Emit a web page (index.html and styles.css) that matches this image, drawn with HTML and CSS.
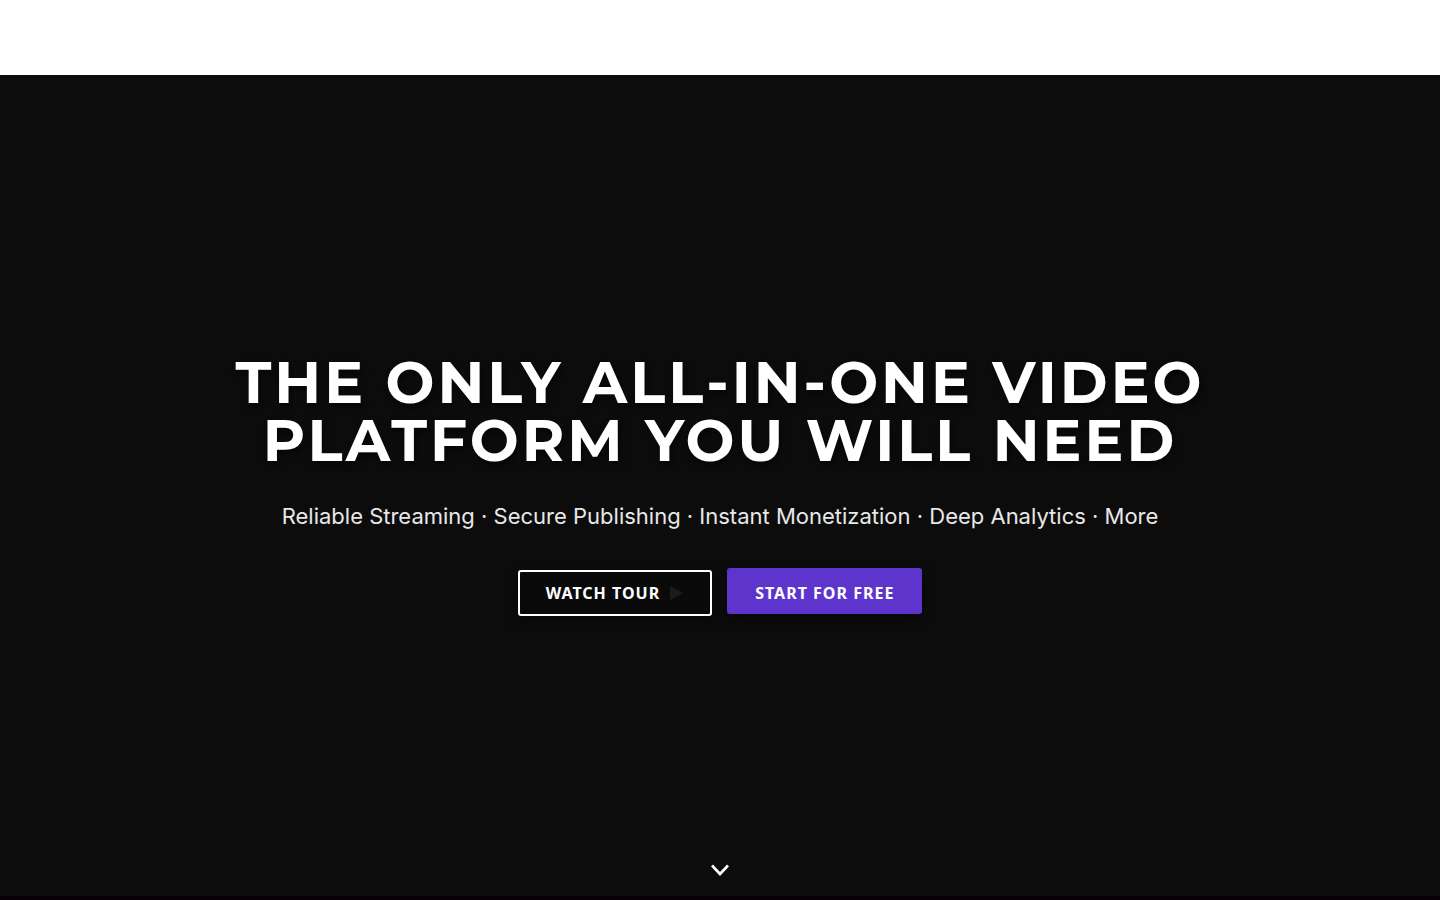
FILE: index.html
```
<!DOCTYPE html>
<html lang="en">
<head>
    <meta charset="UTF-8">
    <meta name="viewport" content="width=device-width, initial-scale=1.0">
    <title>The only all-in-one video platform you will need</title>
    <link rel="stylesheet" href="styles.css">
</head>
<body>
    <header class="topbar"></header>
    <main class="hero">
        <section class="hero-content">
            <h1>The only all-in-one video platform you will need</h1>
            <p class="subtitle">Reliable Streaming · Secure Publishing · Instant Monetization · Deep Analytics · More</p>
            <div class="actions">
                <button type="button" class="btn btn-outline">Watch tour
                    <svg class="play" viewBox="0 0 16 16" aria-hidden="true"><path d="M2 1 15 8 2 15z"/></svg>
                </button>
                <button type="button" class="btn btn-primary">Start for free</button>
            </div>
        </section>
        <a href="#next" class="scroll-down" aria-label="Scroll down">
            <svg viewBox="0 0 20 12" aria-hidden="true"><path d="M2 1.5 10 10 18 1.5"/></svg>
        </a>
    </main>
    <div id="next" class="next"></div>
</body>
</html>
```
FILE: styles.css
```
* {
    box-sizing: border-box;
}

body {
    margin: 0;
    min-height: 100vh;
    display: flex;
    flex-direction: column;
    font-family: Inter, sans-serif;
    background-color: #0c0c0c;
}

.topbar {
    height: 75px;
    background-color: white;
}

.hero {
    flex: 1;
    display: grid;
    grid-template-rows: 1fr auto 1fr;
    justify-items: center;
    padding: 0 20px 1px;
    color: white;
    text-align: center;
}

.hero-content {
    grid-row: 2;
    max-width: 1060px;
}

h1 {
    margin: 0 0 31px;
    font-family: Montserrat, sans-serif;
    font-size: 58px;
    font-weight: 700;
    line-height: 58px;
    letter-spacing: 3px;
    text-transform: uppercase;
    text-shadow: 2px 4px 6px rgba(0, 0, 0, 0.5);
}

.subtitle {
    margin: 0 0 37px;
    font-size: 22px;
    line-height: 30px;
    color: #e8e8e8;
}

.actions {
    display: flex;
    align-items: baseline;
    justify-content: center;
    flex-wrap: wrap;
    gap: 15px;
}

.btn {
    display: flex;
    align-items: center;
    justify-content: center;
    gap: 8px;
    height: 46px;
    padding: 0 26px;
    border: 2px solid white;
    border-radius: 3px;
    font-family: "Noto Sans", sans-serif;
    font-size: 16px;
    font-weight: 700;
    letter-spacing: 1px;
    text-transform: uppercase;
    color: white;
    box-shadow: 0 4px 12px rgba(0, 0, 0, 0.4);
    cursor: pointer;
}

.btn-outline {
    background-color: #0a0a0a;
}

.btn-primary {
    padding-top: 4px;
    background-color: #5e35cc;
    border-color: #5e35cc;
}

.play {
    width: 16px;
    height: 16px;
    fill: #1c1c1c;
}

.scroll-down {
    grid-row: 3;
    align-self: end;
    display: block;
    margin-bottom: 19px;
}

.scroll-down svg {
    display: block;
    width: 20px;
    height: 12px;
    fill: none;
    stroke: white;
    stroke-width: 2.6;
}

.next {
    height: 4px;
    background-color: #080004;
}
```
